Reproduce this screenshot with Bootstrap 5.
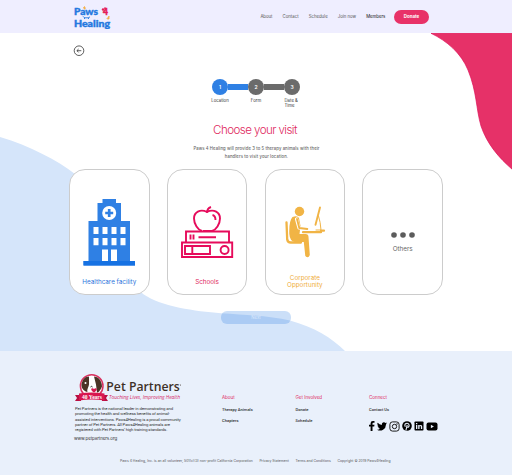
<!DOCTYPE html>
<html lang="en">
<head>
<meta charset="utf-8">
<meta name="viewport" content="width=device-width, initial-scale=1">
<title>Paws 4 Healing</title>
<link href="https://cdn.jsdelivr.net/npm/bootstrap@5.3.0/dist/css/bootstrap.min.css" rel="stylesheet">
<style>
body{font-family:Inter,"Liberation Sans",sans-serif;font-size:4.4px;line-height:1.2;color:#333;background:#fff;overflow:hidden}
svg{display:block;flex:none}
a{color:inherit;text-decoration:none}
.topbar{height:33px;background:#efeeff;padding:0 83px 0 73px}
.topnav{gap:10.1px;color:#555;font-size:4.3px;padding-top:1px}
.topnav .current{color:#111}
.btn-donate{width:35px;height:13.5px;margin-left:-1.5px;border-radius:7px;background:#e83268;color:#fff;font-size:4.4px;font-weight:700}
.stage{height:317.5px}
.shapes{z-index:0}
.stage-body{z-index:1}
.back{padding:12px 0 0 73px;height:46px}
.steps{width:108px;margin-left:202px}
.step{width:36px}
.step-last{padding-left:10.5px}
.dot{width:16px;height:16px;background:#6b6b6b;color:#fff;font-weight:600;font-size:5px}
.dot.on{background:#2f80e4}
.bar{height:5.5px;width:20px;background:#6b6b6b}
.bar.on{background:#2f80e4}
.step-label{font-size:4.3px;line-height:5.2px;margin-top:2.5px}
.title{font-weight:300;font-size:11.6px;line-height:14px;letter-spacing:-.58px;color:#e0285e;margin:14.6px 0 0;width:510px}
.sub{font-size:4.2px;line-height:8px;letter-spacing:.1px;color:#666;font-weight:500;margin:8.9px 0 0;width:513px}
.choices{gap:17.2px;padding-left:69px;margin-top:8px}
.choice{width:80.6px;height:125.4px;border:.9px solid #ccc;border-radius:16px;background:#fff;font-size:6.3px;line-height:6.8px}
.next{width:69.5px;height:13.3px;margin:16px 0 0 221.3px;border-radius:6px;background:rgba(47,128,228,.25);color:#dceafd;font-size:4.3px}
.foot{height:125px;background:#e9f0fb;padding:22px 0 0 74px}
.partner{width:148px}
.blurb{font-family:Roboto,sans-serif;font-size:4.25px;letter-spacing:-.125px;line-height:5.42px;margin:3.2px 0 0 1px}
.site{font-size:4.4px;letter-spacing:-.05px;margin-top:3.7px}
.links{width:73.5px;padding-top:22.6px;font-family:Roboto,sans-serif;font-size:4.1px;font-weight:500;line-height:5px}
.links h2{font-family:Inter,sans-serif;font-size:4.5px;line-height:6px;font-weight:400;color:#e0285e;margin:0 0 6.2px}
.links a{display:block;margin-bottom:5.3px}
.social{gap:2px;padding-top:3.3px}
.legal{gap:6.6px;font-size:3.4px;letter-spacing:.02px;line-height:5px;color:#555;margin:17px 0 0 46px}
</style>
<script src="https://cdn.jsdelivr.net/npm/bootstrap@5.3.0/dist/js/bootstrap.bundle.min.js"></script>
</head>
<body>
<header class="topbar d-flex align-items-center justify-content-between">
  <a href="#" class="brand-art" aria-label="Paws 4 Healing">
    <svg width="38" height="24" viewBox="0 0 38 24" font-family="Lato,sans-serif" font-weight="900">
      <path d="M11.500 4.500l-1-2 1-1 1 2M35 14.500l-1-1 1.500-1.500 .5-1v3" fill="#f2b04a" stroke="#f2b04a" stroke-width=".8"/>
      <text x="1" y="10" font-size="9.800" textLength="24" lengthAdjust="spacingAndGlyphs" fill="#2479df" stroke="#2479df" stroke-width=".4">Paws</text>
      <text x="30" y="9.600" font-size="8.500" fill="#e41b58" stroke="#e41b58" stroke-width=".5">4</text>
      <circle cx="30" cy="4.500" r="1.200" fill="#e41b58"/><circle cx="32" cy="3.200" r=".9" fill="#e41b58"/>
      <path d="M10 11.300l1.500 1.500h4l1.500-1M11.500 12.500v1.500M15.500 12.500v1.500" stroke="#2479df" fill="none" stroke-width=".9"/>
      <text x="1" y="22" font-size="9.800" textLength="36" lengthAdjust="spacingAndGlyphs" fill="#2479df" stroke="#2479df" stroke-width=".4">Healing</text>
    </svg>
  </a>
  <nav class="topnav d-flex align-items-center">
    <a href="#">About</a><a href="#">Contact</a><a href="#">Schedule</a><a href="#">Join now</a><a href="#" class="current">Members</a>
    <a href="#" class="btn-donate d-flex align-items-center justify-content-center">Donate</a>
  </nav>
</header>

<main class="stage position-relative">
  <svg class="shapes position-absolute top-0 start-0" width="512" height="318" viewBox="0 33 512 318">
    <path d="M0 137C30 146 57 160 75 174C107 200 111 262 143 294C162 307 195 311 221 313.300C247 315 270 316 290 320.500C314 327 332 338 345 351H0Z" fill="#d5e5fa"/>
    <path d="M431 33.300C447 41 461 53 468 70C477 92 476 109 481 126C487 144 499 158 513 170V33.300Z" fill="#e63168" stroke="#de0f57" stroke-width=".7"/>
  </svg>
  <div class="stage-body position-relative">
    <div class="back">
      <svg width="12" height="12" viewBox="0 0 12 12" fill="none" stroke="#333" stroke-width=".8"><circle cx="6" cy="5.700" r="4.800"/><path d="M8.300 5.700H4M5.600 4L3.900 5.700l1.700 1.700"/></svg>
    </div>
    <div class="steps d-flex align-items-center justify-content-center">
      <span class="dot on rounded-circle d-flex align-items-center justify-content-center">1</span><span class="bar on"></span>
      <span class="dot rounded-circle d-flex align-items-center justify-content-center">2</span><span class="bar"></span>
      <span class="dot rounded-circle d-flex align-items-center justify-content-center">3</span>
    </div>
    <div class="steps d-flex step-label text-center">
      <span class="step">Location</span><span class="step">Form</span><span class="step step-last text-start">Date &amp;<br>Time</span>
    </div>
    <h1 class="title text-center">Choose your visit</h1>
    <p class="sub text-center">Paws 4 Healing will provide 3 to 5 therapy animals with their<br>handlers to visit your location.</p>

    <div class="choices d-flex text-center">
      <a href="#" class="choice d-flex flex-column align-items-center" style="color:#2b74dc">
        <svg width="54" height="105" viewBox="82 170 54 105">
          <path d="M102.500 199H116V203h5v18h9v40h5v4.500H83.500V261h5v-40h9v-18h5z" fill="#2f80e4"/>
          <path d="M83.500 261h51.500v4.500H83.500z" fill="#1672e3"/>
          <circle cx="109.200" cy="213" r="7" fill="#fff"/>
          <path d="M109.200 209v8M105.200 213h8" stroke="#2f80e4" stroke-width="2.700"/>
          <path d="M93.500 227h5v7h-5zM102.500 227h5v7h-5zM111.500 227h5v7h-5zM120.500 227h5v7h-5zM93.500 238h5v7.300h-5zM102.500 238h5v7.300h-5zM111.500 238h5v7.300h-5zM120.500 238h5v7.300h-5zM102 249.500h6V261h-6zM111 249.500h6V261h-6z" fill="#fff"/>
        </svg>
        <span class="mt-1">Healthcare facility</span>
      </a>
      <a href="#" class="choice d-flex flex-column align-items-center" style="color:#e0285e">
        <svg width="54" height="105" viewBox="180 170 54 105" fill="none" stroke="#e60b5b" stroke-width="1.900">
          <path d="M202 231c-4-1-8-7-8-12.500c0-6 6-10 13-6.500c7-3.500 13 .5 13 6.500c0 5.500-4 11.500-8 12.500M207 213c0-3 1-5 4-6M212.500 215c2 .5 3 2 3 5"/>
          <path d="M203 231h9M186 242v-10.500h43V242M190.500 234.500v5M193.500 234.500v5M198.500 237.200h17.500"/>
          <path d="M182 242.500h50.200V257H182zM185 246h25v8h-25zM192.300 246v8"/>
          <circle cx="224.600" cy="250" r="4"/>
        </svg>
        <span class="mt-1">Schools</span>
      </a>
      <a href="#" class="choice d-flex flex-column align-items-center" style="color:#efae3c">
        <svg width="54" height="101" viewBox="278 170 54 101" fill="none" stroke="#f1b445" stroke-linecap="round" stroke-linejoin="round">
          <circle cx="299.500" cy="211.500" r="4.700" fill="#f1b445" stroke="none"/>
          <path d="M292.500 217q5-2 6.500 1l1.500 8l-1 8h6q3 0 3 3l1.300 18q-1.500 4-4.500 1l-1.500-14h-9q-5-1-5.500-8q-.5-13 3.200-17z" fill="#f1b445" stroke="none"/>
          <path d="M296.500 219l2.500 9l9 1" stroke="#fff" stroke-width="3.200"/>
          <path d="M297 219l2.300 9l8 1" stroke-width="1.900"/>
          <path d="M286.500 222.500l.7 17q.5 3 3.500 3H301" stroke-width="2.300"/>
          <path d="M303 232.200h18v-1.500h3" stroke-width="2.200"/>
          <path d="M320 207.500l-4.500 17.300" stroke-width="1.900"/>
          <path d="M318.500 216q2 6 2.500 14h-5" stroke-width="1"/>
        </svg>
        <span class="mt-1">Corporate<br>Opportunity</span>
      </a>
      <a href="#" class="choice d-flex flex-column align-items-center" style="color:#666">
        <svg width="54" height="72" viewBox="376 170 54 72" fill="#5c5c5c"><circle cx="394" cy="235" r="2.800"/><circle cx="403" cy="235" r="2.800"/><circle cx="412" cy="235" r="2.800"/></svg>
        <span class="mt-1">Others</span>
      </a>
    </div>
    <a href="#" class="next d-flex align-items-center justify-content-center">Next</a>
  </div>
</main>

<footer class="foot">
  <div class="d-flex">
    <div class="partner">
      <svg width="110" height="30" viewBox="74 372 110 30">
        <circle cx="91.700" cy="385" r="11.300" fill="#fff" stroke="#d8315f" stroke-width="1.500"/>
        <path d="M89 375.500c-5 0-7.500 5-7.500 9c0 3 3 6 6 6.500c-1-3 2-6 1.500-9zM94 375.500c4 0 8 4 8 10c-2 5-4 6-5 6l-1-8z" fill="#4a3426"/>
        <circle cx="85.500" cy="382" r="1" fill="#fff"/>
        <path d="M90.500 386q1.300-1.300 2 0" stroke="#222" fill="none"/>
        <path d="M94 391.500c-5-3-2-5.500 0-3.500c2-2 5 .5 0 3.500z" fill="#d8174f"/>
        <path d="M75 394h6v6h-6l2-3zM108 394h-6v6h6l-2-3z" fill="#b80f42"/>
        <path d="M79 392.500q12.700-2 25.500 0v7q-12.700-2-25.500 0z" fill="#d8174f"/>
        <text x="82" y="397.500" font-family="Liberation Serif,serif" font-weight="700" font-size="5.300" fill="#fff" textLength="20" lengthAdjust="spacingAndGlyphs">40 Years</text>
        <text x="106.300" y="390.200" font-family="Open Sans,sans-serif" font-weight="600" font-size="12.500" fill="#3f3027" textLength="73.500" lengthAdjust="spacingAndGlyphs">Pet Partners</text>
        <circle cx="180.500" cy="384" r=".5" fill="#3f3027"/>
        <text x="109" y="398.300" font-family="Open Sans,sans-serif" font-style="italic" font-size="5" fill="#d62964" textLength="71" lengthAdjust="spacingAndGlyphs">Touching Lives, Improving Health</text>
      </svg>
      <p class="blurb text-nowrap">Pet Partners is the national leader in demonstrating and<br>promoting the health and wellness benefits of animal-<br>assisted interventions. Paws4Healing is a proud community<br>partner of Pet Partners. All Paws4Healing animals are<br>registered with Pet Partners’ high training standards.</p>
      <a href="#" class="site d-block">www.petpartners.org</a>
    </div>
    <div class="links"><h2>About</h2><a href="#">Therapy Animals</a><a href="#">Chapters</a></div>
    <div class="links"><h2>Get Involved</h2><a href="#">Donate</a><a href="#">Schedule</a></div>
    <div class="links"><h2>Connect</h2><a href="#">Contact Us</a>
      <div class="social d-flex align-items-center">
        <svg width="6" height="10" viewBox="0 0 6 10"><path d="M1.600 10V5.600H0V3.800h1.600V2.300Q1.600 0 3.900 0H5.500v1.700H4.400q-.9 0-.9.900v1.200h2l-.3 1.800H3.500V10z"/></svg>
        <svg width="10" height="9" viewBox="0 0 24 20"><path d="M24 2.400a10 10 0 0 1-2.800.8A5 5 0 0 0 23.300.5a10 10 0 0 1-3.100 1.200A4.900 4.900 0 0 0 11.800 6.200 14 14 0 0 1 1.700 1a4.900 4.900 0 0 0 1.500 6.600A5 5 0 0 1 1 7a4.900 4.900 0 0 0 3.900 4.900 5 5 0 0 1-2.200 0 4.900 4.900 0 0 0 4.600 3.500A10 10 0 0 1 0 17.500 14 14 0 0 0 21.500 5 10 10 0 0 0 24 2.400z"/></svg>
        <svg width="11" height="11" viewBox="0 0 11 11" fill="none" stroke="#111" stroke-width=".95"><rect x=".9" y=".9" width="9.200" height="9.200" rx="2.600"/><circle cx="5.500" cy="5.500" r="2.200"/><circle cx="8" cy="3" r=".3"/></svg>
        <svg width="10" height="10" viewBox="0 0 10 10"><circle cx="5" cy="5" r="4.800"/><path d="M3.300 5.700C2 3.500 3.500 2.200 5.200 2.200C7.700 2.200 7.700 6.300 5.600 6.300Q4.800 6.300 4.700 5.600M5.200 3.900L3.900 9.500" fill="none" stroke="#e9f0fb" stroke-width="1.100"/></svg>
        <svg width="10" height="10" viewBox="0 0 10 10"><rect x=".5" y=".5" width="9" height="9" rx=".8"/><path d="M2 4h1.300v4H2zM2 2h1.300v1.300H2zM4.200 4h1.300v.5c1-1.100 2.700-.6 2.700 1.100V8H6.900V5.800c0-1.100-1.400-1.100-1.400 0V8H4.200z" fill="#e9f0fb"/></svg>
        <svg width="12" height="9" viewBox="0 0 12 9"><rect x=".5" y=".5" width="11" height="8" rx="2"/><path d="M4.900 2.700v3.600l3-1.800z" fill="#e9f0fb"/></svg>
      </div>
    </div>
  </div>
  <div class="legal d-flex text-nowrap"><span>Paws 4 Healing, Inc. is an all volunteer, 501(c)(3) non-profit California Corporation</span><a href="#">Privacy Statement</a><a href="#">Terms and Conditions</a><a href="#">Copyright © 2019 Paws4Healing</a></div>
</footer>
</body>
</html>
